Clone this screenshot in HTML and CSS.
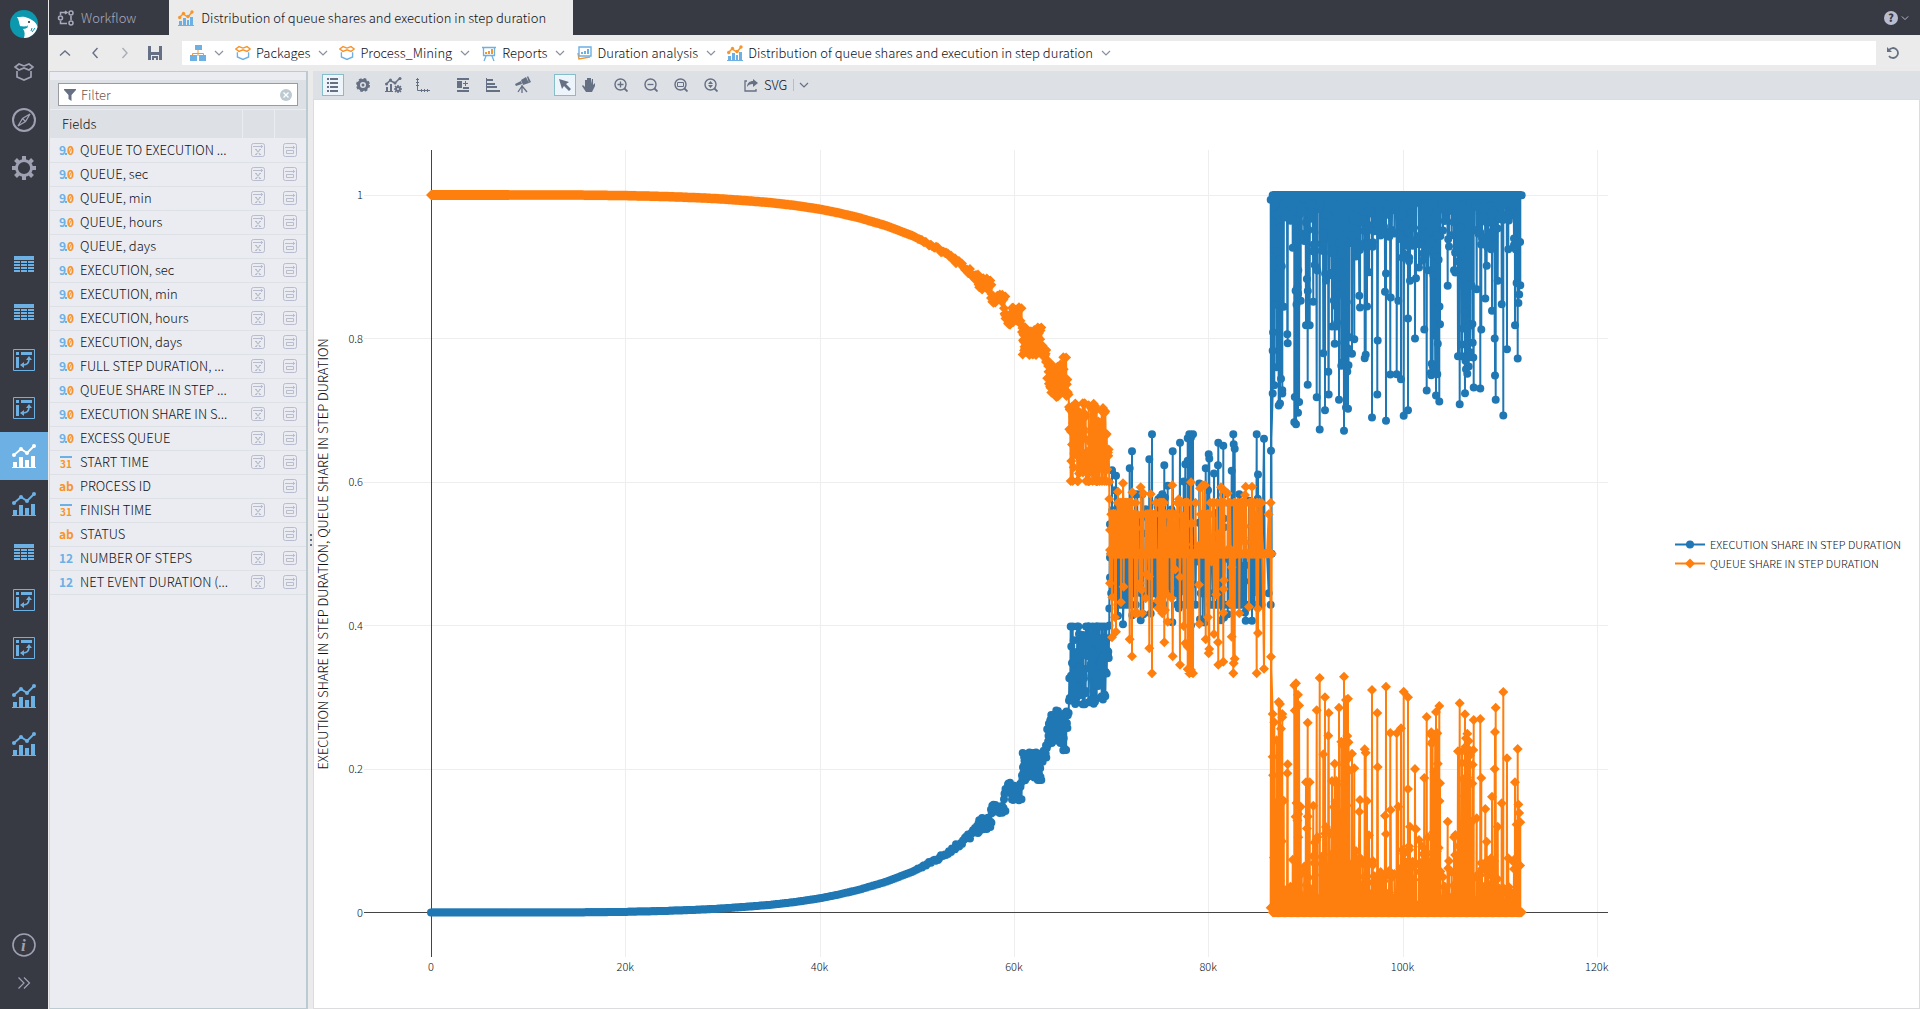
FILE: index.html
```html
<!DOCTYPE html>
<html lang="en">
<head>
<meta charset="utf-8">
<title>Distribution of queue shares and execution in step duration</title>
<link rel="stylesheet" href="styles.css">
</head>
<body>
<svg class="sprite" aria-hidden="true">
  <symbol id="i-table" viewBox="0 0 20 16"><path fill="currentColor" d="M0 0h20v4H0zM0 5h6v2H0zM7 5h6v2H7zM14 5h6v2h-6zM0 8h6v2H0zM7 8h6v2H7zM14 8h6v2h-6zM0 11h6v2H0zM7 11h6v2H7zM14 11h6v2h-6zM0 14h6v2H0zM7 14h6v2H7zM14 14h6v2h-6z"/></symbol>
  <symbol id="i-pivot" viewBox="0 0 22 22"><path fill="none" stroke="currentColor" d="M.5.5h21v21H.5z"/><path fill="currentColor" d="M3 3h3v3H3zM8 3h11v3H8zM3 8h3v11H3zM16 7l3 4h-6zM7 16l4-3v6z"/><path fill="none" stroke="currentColor" stroke-width="1.6" d="M16 10c0 4-2 6-6 6"/></symbol>
  <symbol id="i-chart" viewBox="0 0 24 24"><path fill="currentColor" d="M0 23h24v1H0zM1 18h4v5H1zM7 13h4v10H7zM13 16h4v7h-4zM19 12h4v11h-4z"/><path fill="none" stroke="currentColor" stroke-width="1.8" d="M2 11l7-6 6 4 7-7"/><g fill="currentColor"><circle cx="2" cy="11" r="2"/><circle cx="9" cy="5" r="2"/><circle cx="15" cy="9" r="2"/><circle cx="22" cy="2" r="2"/></g></symbol>
  <symbol id="i-chart2" viewBox="0 0 16 16"><path fill="#6db0e4" d="M0 15h16v1H0zM1 11h3v4H1zM5 8h3v7H5zM9 10h2v5H9zM12 7h3v8h-3z"/><path fill="none" stroke="#f7952c" stroke-width="1.4" d="M1 8l4-4 5 3 4-5"/><g fill="#f7952c"><circle cx="1.700" cy="7.500" r="1.700"/><circle cx="5.500" cy="3.500" r="1.700"/><circle cx="10" cy="6.500" r="1.700"/><circle cx="14" cy="2" r="1.700"/></g></symbol>
  <symbol id="i-pack" viewBox="0 0 20 18"><path fill="none" stroke="var(--top)" stroke-width="1.700" d="M10 3L5 1 1 4l4 3 5-2 5 2 4-3-4-3-5 2"/><path fill="none" stroke="var(--low)" stroke-width="1.700" d="M3 8v6l7 3 7-3V8"/></symbol>
  <symbol id="i-down" viewBox="0 0 10 6"><path fill="none" stroke="currentColor" stroke-width="1.200" d="M1 1l4 4 4-4"/></symbol>
  <symbol id="i-x" viewBox="0 0 14 14"><rect x=".5" y=".5" width="13" height="13" rx="2" fill="none" stroke="currentColor"/><path fill="none" stroke="currentColor" d="M2 3.500h10M10.500 2v3"/><path fill="none" stroke="currentColor" stroke-width="1.200" d="M5 6.500l4 5M9 6.500l-4 5M4 6.500h2M8 6.500h2M4 11.500h2M8 11.500h2"/></symbol>
  <symbol id="i-m" viewBox="0 0 14 14"><rect x=".5" y=".5" width="13" height="13" rx="2" fill="none" stroke="currentColor"/><path fill="none" stroke="currentColor" d="M2 4.500h10M10.500 3v3M3.500 7.500h7v3h-7z"/></symbol>
  <symbol id="i-mag" viewBox="0 0 14 14"><circle cx="6.500" cy="6.500" r="5.500" fill="none" stroke="currentColor" stroke-width="1.400"/><path stroke="currentColor" stroke-width="1.800" d="M10.500 10.500l3 3"/></symbol>
</svg>
<div class="app">
  <nav class="rail" aria-label="Main">
    <button class="rail-item" aria-label="Home"><svg width="28" height="28" viewBox="0 0 28 28"><circle cx="14" cy="14" r="14" fill="#0c98ae"/><path fill="#fff" d="M7 7c3 0 7-1 11 1 5 2 9 5 9.500 9C26 23 21 28 14 28c1-4 1-6-1-9 2 0 4-1 5-2-3 0-6 0-8-1-1-3-1-6-3-9z"/><path d="M11 17c3 0 5 0 7-1M22 18l-1 3M25 18l-3 4" fill="none" stroke="#0c98ae"/><circle cx="19" cy="12" r="1" fill="#223"/></svg></button>
    <button class="rail-item" aria-label="Packages"><svg class="mono" width="20" height="18"><use href="#i-pack"/></svg></button>
    <button class="rail-item" aria-label="Explore"><svg width="24" height="24" viewBox="0 0 24 24" fill="none" stroke="currentColor"><circle cx="12" cy="12" r="11" stroke-width="2"/><path stroke-width="1.300" d="M18 6l-4.500 7.500L6 18l4.500-7.500zM10.500 10.500l3 3"/></svg></button>
    <button class="rail-item" aria-label="Settings"><svg width="24" height="24" viewBox="0 0 24 24" fill="none" stroke="currentColor"><circle cx="12" cy="12" r="7.500" stroke-width="2.800"/><g stroke-width="4"><path d="M12 0v4M12 20v4M0 12h4M20 12h4M3.500 3.500l3 3M17.500 17.500l3 3M3.500 20.500l3-3M17.500 6.500l3-3"/></g></svg></button>
    <div class="rail-docs">
      <button class="rail-item" aria-label="Table 1"><svg width="20" height="16"><use href="#i-table"/></svg></button>
      <button class="rail-item" aria-label="Table 2"><svg width="20" height="16"><use href="#i-table"/></svg></button>
      <button class="rail-item" aria-label="Pivot 1"><svg width="22" height="22"><use href="#i-pivot"/></svg></button>
      <button class="rail-item" aria-label="Pivot 2"><svg width="22" height="22"><use href="#i-pivot"/></svg></button>
      <button class="rail-item current" aria-label="Chart 1"><svg width="24" height="24"><use href="#i-chart"/></svg></button>
      <button class="rail-item" aria-label="Chart 2"><svg width="24" height="24"><use href="#i-chart"/></svg></button>
      <button class="rail-item" aria-label="Table 3"><svg width="20" height="16"><use href="#i-table"/></svg></button>
      <button class="rail-item" aria-label="Pivot 3"><svg width="22" height="22"><use href="#i-pivot"/></svg></button>
      <button class="rail-item" aria-label="Pivot 4"><svg width="22" height="22"><use href="#i-pivot"/></svg></button>
      <button class="rail-item" aria-label="Chart 3"><svg width="24" height="24"><use href="#i-chart"/></svg></button>
      <button class="rail-item" aria-label="Chart 4"><svg width="24" height="24"><use href="#i-chart"/></svg></button>
    </div>
    <button class="rail-item about" aria-label="About"><svg width="24" height="24" viewBox="0 0 24 24"><circle cx="12" cy="12" r="11" fill="none" stroke="currentColor" stroke-width="1.600"/><text class="info" x="9" y="18" fill="currentColor">i</text></svg></button>
    <button class="rail-item expand" aria-label="Expand"><svg width="12" height="12" viewBox="0 0 12 12" fill="none" stroke="currentColor" stroke-width="1.200"><path d="M.5.500L6 6 .5 11.500M6 .500L11.500 6 6 11.500"/></svg></button>
  </nav>

  <div class="main">
    <header class="tabs">
      <button class="tab"><svg width="16" height="16" viewBox="0 0 16 16" fill="none" stroke="currentColor" stroke-width="1.500"><circle cx="2.500" cy="8" r="2"/><circle cx="13" cy="3" r="2"/><circle cx="13" cy="13" r="2"/><path d="M2.500 5V2.500H8M13 6v4M2.500 11v2.500H9M7 1l2 1.500L7 4"/></svg>Workflow</button>
      <button class="tab open"><svg width="16" height="16"><use href="#i-chart2"/></svg>Distribution of queue shares and execution in step duration</button>
      <button class="help" aria-label="Help"><svg width="14" height="14" viewBox="0 0 14 14"><circle cx="7" cy="7" r="7" fill="#b9bdcf"/><text class="q" x="4" y="11">?</text></svg><svg width="8" height="6"><use href="#i-down"/></svg></button>
    </header>

    <div class="path-row">
      <div class="nav-buttons">
        <button aria-label="Up"><svg width="10" height="6" viewBox="0 0 10 6" fill="none" stroke="currentColor" stroke-width="1.400"><path d="M0 5.500L5 1l5 4.500"/></svg></button>
        <button aria-label="Back"><svg width="6" height="10" viewBox="0 0 6 10" fill="none" stroke="currentColor" stroke-width="1.400"><path d="M5.500 0L1 5l4.500 5"/></svg></button>
        <button class="faint" aria-label="Forward"><svg width="6" height="10" viewBox="0 0 6 10" fill="none" stroke="currentColor" stroke-width="1.400"><path d="M.5 0L5 5 .5 10"/></svg></button>
        <button aria-label="Save"><svg width="14" height="14" viewBox="0 0 14 14"><path fill="currentColor" d="M0 0h3v6h8V0h3v14h-3V9H3v5H0zM4 10h6v4H8v-2H6v2H4z"/></svg></button>
      </div>
      <div class="crumbs">
        <button class="crumb"><svg width="16" height="16" viewBox="0 0 16 16"><path fill="none" stroke="#f7952c" d="M8 5v3M2.500 11V8.500h11V11M8 8v3"/><path fill="#6db0e4" d="M5 0h7v5H5zM0 10h7v6H0zM9 10h7v6H9z"/></svg><svg class="chev" width="10" height="6"><use href="#i-down"/></svg></button>
        <button class="crumb"><svg class="duo" width="16" height="16"><use href="#i-pack"/></svg>Packages<svg class="chev" width="10" height="6"><use href="#i-down"/></svg></button>
        <button class="crumb"><svg class="duo" width="16" height="16"><use href="#i-pack"/></svg>Process_Mining<svg class="chev" width="10" height="6"><use href="#i-down"/></svg></button>
        <button class="crumb"><svg width="16" height="16" viewBox="0 0 16 16"><path fill="none" stroke="#6db0e4" stroke-width="1.300" d="M1 2.500h14M2.500 3v7.500h11V3M5 11l-2 5M11 11l2 5"/><path fill="#f7952c" d="M4 7h2v2H4zM7 6h2v3H7zM10 4h2v5h-2z"/></svg>Reports<svg class="chev" width="10" height="6"><use href="#i-down"/></svg></button>
        <button class="crumb"><svg width="16" height="16" viewBox="0 0 16 16"><path fill="none" stroke="#f7952c" stroke-width="1.500" d="M2 8l1 6 11-2"/><path fill="#fff" stroke="#6db0e4" stroke-width="1.400" d="M3 2h12v9H3z"/><path fill="#6db0e4" d="M5 7h2v2H5zM8 6h2v3H8zM11 4h2v5h-2z"/></svg>Duration analysis<svg class="chev" width="10" height="6"><use href="#i-down"/></svg></button>
        <button class="crumb"><svg width="16" height="16"><use href="#i-chart2"/></svg>Distribution of queue shares and execution in step duration<svg class="chev" width="10" height="6"><use href="#i-down"/></svg></button>
      </div>
      <button class="reload" aria-label="Reload"><svg width="14" height="14" viewBox="0 0 14 14"><path fill="none" stroke="currentColor" stroke-width="1.800" d="M3 4a5 5 0 1 1 0 6"/><path fill="currentColor" d="M1 1v5h5z"/></svg></button>
    </div>

    <div class="work">
      <aside class="panel">
        <div class="filter-row">
          <label class="filter"><svg width="12" height="12" viewBox="0 0 12 12"><path fill="#667084" d="M0 0h12v1L7.500 6v6l-3-2V6L0 1z"/></svg><input type="text" placeholder="Filter" aria-label="Filter"><svg width="12" height="12" viewBox="0 0 12 12"><circle cx="6" cy="6" r="6" fill="#bccad2"/><path stroke="#fff" stroke-width="1.300" d="M3.500 3.500l5 5M8.500 3.500l-5 5"/></svg></label>
        </div>
        <table class="fields">
          <thead><tr><th>Fields</th><th class="act"></th><th class="act"></th></tr></thead>
          <tbody id="fields"></tbody>
        </table>
      </aside>
      <div class="grip"><i></i><i></i><i></i></div>
      <section class="view">
        <div class="toolbar">
          <button class="tool on" aria-label="Legend"><svg width="12" height="14" viewBox="0 0 12 14"><path fill="currentColor" d="M0 0h2v2H0zM3 0h8v2H3zM0 4h2v2H0zM3 4h8v2H3zM0 8h2v2H0zM3 8h8v2H3zM0 12h2v2H0zM3 12h8v2H3z"/></svg></button>
          <button class="tool" aria-label="Options"><svg width="14" height="14" viewBox="0 0 14 14"><circle cx="7" cy="7" r="4.500" fill="none" stroke="currentColor" stroke-width="3"/><circle cx="7" cy="7" r="6" fill="none" stroke="currentColor" stroke-width="2" stroke-dasharray="2.700 2"/><circle cx="7" cy="7" r="1.500" fill="currentColor"/></svg></button>
          <button class="tool" aria-label="Series options"><svg width="17" height="16" viewBox="0 0 17 16"><path fill="none" stroke="currentColor" stroke-width="1.500" d="M1 7.500l4-4L10 6l5-5"/><path fill="currentColor" d="M0 14h8v1H0zM1 10h2v4H1zM5 7h2v7H5z"/><g fill="currentColor"><circle cx="1.500" cy="7" r="1.500"/><circle cx="5.500" cy="3" r="1.500"/><circle cx="10" cy="6" r="1.500"/><circle cx="15" cy="1.500" r="1.500"/></g><circle cx="13" cy="12" r="2" fill="none" stroke="currentColor" stroke-width="2"/><path stroke="currentColor" stroke-width="1.500" d="M13 8v1.500M13 14.500V16M9 12h1.500M15.500 12H17M10 9l1 1M15 14l1 1M16 9l-1 1M11 14l-1 1"/></svg></button>
          <button class="tool" aria-label="Axes"><svg width="14" height="14" viewBox="0 0 14 14"><path fill="none" stroke="currentColor" d="M1.500 0v12.500H14M0 1.500h3M0 4.500h3M0 7.500h3M5.500 11v3M8.500 11v3M11.500 11v3"/></svg></button>
          <button class="tool apart" aria-label="Layout"><svg width="14" height="14" viewBox="0 0 14 14"><path fill="currentColor" d="M1 0h12v2H1zM1 3h5v7H1zM1 12h12v2H1zM7 9h6v2H7zM9 3h1v2h2v1h-2v2H9V6H7V5h2z"/></svg></button>
          <button class="tool" aria-label="Sort"><svg width="14" height="14" viewBox="0 0 14 14"><path fill="currentColor" d="M0 0h1v14H0zM1 1h6v2H1zM1 5h8v2H1zM1 8h10v2H1zM1 12h13v2H1z"/></svg></button>
          <button class="tool" aria-label="Preview"><svg width="16" height="16" viewBox="0 0 16 16"><path fill="currentColor" d="M0 7l6-3 1 3-6 2zM6 3l5-3 3 6-6 2zM12 0l1-1 3 6-2 1z"/><path fill="none" stroke="currentColor" stroke-width="1.300" d="M7 8v8M7 9l-4 6M7 9l5 6"/></svg></button>
          <button class="tool on apart-s" aria-label="Select"><svg width="14" height="14" viewBox="0 0 14 14"><path fill="currentColor" d="M1 1l10 3-3 2 5 5-2 2-5-5-2 3z"/></svg></button>
          <button class="tool hand" aria-label="Pan"><svg width="14" height="14" viewBox="0 0 14 14"><path fill="currentColor" d="M4 14L0 8l1-1 2 2V2h2v4V0h2v6V0h2v6l1-5h1v6l2-2v3l-2 4-1 2z"/></svg></button>
          <button class="tool" aria-label="Zoom in"><svg width="14" height="14" viewBox="0 0 14 14"><use href="#i-mag" width="14" height="14"/><path stroke="currentColor" stroke-width="1.300" d="M3.500 6.500h6M6.500 3.500v6"/></svg></button>
          <button class="tool" aria-label="Zoom out"><svg width="14" height="14" viewBox="0 0 14 14"><use href="#i-mag" width="14" height="14"/><path stroke="currentColor" stroke-width="1.300" d="M3.500 6.500h6"/></svg></button>
          <button class="tool" aria-label="Zoom to fit"><svg width="14" height="14" viewBox="0 0 14 14"><use href="#i-mag" width="14" height="14"/><path fill="none" stroke="currentColor" d="M3.500 4.500h6v4h-6z"/></svg></button>
          <button class="tool" aria-label="Fit height"><svg width="14" height="14" viewBox="0 0 14 14"><use href="#i-mag" width="14" height="14"/><path fill="currentColor" d="M6.500 3l2.500 3H4zM6.500 10L4 7h5z"/></svg></button>
          <button class="export"><svg width="14" height="14" viewBox="0 0 14 14"><path fill="none" stroke="currentColor" stroke-width="1.300" d="M3 3H1v10h11v-2"/><path fill="currentColor" d="M3 9c0-4 3-6 6-6V1l5 4-5 4V6C6 6 4 7 3 9z"/></svg>SVG</button>
          <button class="more" aria-label="Export format"><svg width="10" height="6"><use href="#i-down"/></svg></button>
        </div>
        <div class="chart"><svg id="plot" viewBox="0 0 1605 908" role="img" aria-label="Execution share and queue share in step duration"></svg></div>
      </section>
    </div>
  </div>
</div>
<script src="app.js"></script>
</body>
</html>
```
FILE: styles.css
```css
* { box-sizing: border-box; }
body {
  margin: 0;
  font-family: "Noto Sans CJK SC", "Noto Sans", sans-serif;
  font-size: 13px;
  font-weight: 300;
  line-height: 20px;
  color: #0e1016;
  background: #ebebeb;
}
button {
  margin: 0;
  padding: 0;
  border: 0;
  background: none;
  font: inherit;
  color: inherit;
  white-space: nowrap;
  display: flex;
  align-items: center;
  justify-content: center;
}
svg { flex: none; display: block; overflow: visible; }
.sprite { position: absolute; width: 0; height: 0; overflow: hidden; }
.app { display: flex; height: 100vh; }

.rail {
  width: 48px;
  flex: none;
  display: flex;
  flex-direction: column;
  background: #383a43;
  color: #9fa1b3;
  padding-bottom: 6px;
}
.rail-item { width: 48px; height: 48px; flex: none; }
.rail-item.about { height: 36px; }
.rail-item.expand { height: 40px; }
.rail-docs { margin: 48px 0 auto; color: #6db0e4; }
.rail-item.current { background: #6db0e4; color: #fff; }
.mono { --top: #9fa1b3; --low: #9fa1b3; }
.duo { --top: #f7952c; --low: #6db0e4; }
.info { font: italic bold 17px "Liberation Serif", serif; }

.main { flex: 1; min-width: 0; display: flex; flex-direction: column; margin-left: 1px; }
.tabs { display: flex; height: 35px; flex: none; background: #383a43; }
.tab { gap: 7px; padding: 0 33px 0 9px; color: #a9abbd; }
.tab.open { padding-right: 27px; background: #ebebeb; color: #0e1016; }
.help { margin-left: auto; gap: 3px; padding-right: 11px; color: #b9bdcf; }
.q { font-size: 11px; font-weight: 900; fill: #383a43; }

.path-row { display: flex; align-items: center; height: 36px; flex: none; color: #667084; }
.nav-buttons { display: flex; padding: 0 12px 0 1px; }
.nav-buttons button { width: 30px; height: 24px; }
.nav-buttons .faint { color: #a9aeb9; }
.crumbs {
  flex: 1;
  display: flex;
  gap: 11px;
  height: 24px;
  padding-left: 8px;
  background: #fff;
}
.crumb { gap: 5px; color: #0e1016; }
.chev { color: #8a90a0; margin-left: 3px; }
.reload { width: 44px; padding-right: 10px; height: 24px; }

.work { flex: 1; min-height: 0; display: flex; }
.panel {
  width: 259px;
  flex: none;
  border: 1px solid #bccad2;
  border-left-color: #ccd6dc;
  border-right-width: 2px;
  background: #ebecf1;
  padding-top: 8px;
}
.filter-row { height: 30px; padding: 3px 8px; background: #dde0e5; border-bottom: 1px solid #ebecf1; }
.filter {
  display: flex;
  align-items: center;
  gap: 5px;
  height: 23px;
  padding: 0 5px;
  background: #fff;
  border: 1px solid #999ba0;
}
.filter input { flex: 1; min-width: 0; height: 20px; border: 0; padding: 0; font: inherit; background: none; outline: 0; }
.filter input::placeholder { color: #64584f; opacity: 1; }
.fields { width: 100%; border-collapse: collapse; table-layout: fixed; }
.fields th { height: 28px; padding: 0 0 0 12px; background: #dde0e5; text-align: left; font-weight: inherit; }
.fields .act { width: 32px; padding: 0; border-left: 1px solid #ebecf1; }
.fields td { height: 24px; padding: 0; border-bottom: 1px solid #dde0e5; }
.fields td button { width: 32px; height: 22px; color: #b9bccd; }
.field { display: flex; align-items: center; gap: 5px; padding-left: 9px; line-height: 20px; white-space: nowrap; }
.field svg text { font-size: 12px; font-weight: 700; }
.field svg .date { font-size: 10px; }
.blue { fill: #6db0e4; }
.orange { fill: #f7952c; }
.slash { stroke: #f7952c; }

.grip { width: 5px; flex: none; display: flex; flex-direction: column; align-items: center; justify-content: center; gap: 3px; }
.grip i { width: 2px; height: 2px; background: #667084; }

.view { flex: 1; min-width: 0; display: flex; flex-direction: column; }
.toolbar { display: flex; align-items: center; height: 28px; flex: none; padding-left: 9px; background: #dde0e5; color: #667084; }
.tool { width: 22px; height: 22px; margin-right: 8px; }
.tool.on { background: #edf5fb; border: 1px solid #86bdcb; }
.apart { margin-left: 10px; }
.tool.apart-s { margin-left: 12px; margin-right: 2px; }
.tool.hand { margin-right: 10px; }
.export { gap: 6px; margin-left: 14px; padding-right: 6px; height: 12px; border-right: 1px solid #b9bccd; color: #0e1016; }
.export svg { color: #667084; }
.more { padding: 0 5px; }
.chart { flex: 1; min-height: 0; background: #fff; border: 1px solid #dcdcde; }
.chart svg { width: 100%; height: 100%; }
.chart text { font-size: 11px; fill: #0e1016; }
.chart .title { font-size: 13px; }
.grid { stroke: #eee; }
.zero { stroke: #444; }
.exec-line, .queue-line { fill: none; stroke-width: 2; stroke-linejoin: round; }
.exec-line { stroke: #1f77b4; }
.queue-line { stroke: #ff7f0e; }
.exec-mark { fill: none; stroke: #1f77b4; stroke-width: 8; stroke-linecap: round; }
.queue-mark { fill: #ff7f0e; }
```
FILE: app.js
```js
// Field list: type, label cut to the column, whether the field has a numeric axis action
const fields = [
  ['9', 'QUEUE TO EXECUTION ...', 1], ['9', 'QUEUE, sec', 1], ['9', 'QUEUE, min', 1],
  ['9', 'QUEUE, hours', 1], ['9', 'QUEUE, days', 1], ['9', 'EXECUTION, sec', 1],
  ['9', 'EXECUTION, min', 1], ['9', 'EXECUTION, hours', 1], ['9', 'EXECUTION, days', 1],
  ['9', 'FULL STEP DURATION, ...', 1], ['9', 'QUEUE SHARE IN STEP ...', 1],
  ['9', 'EXECUTION SHARE IN S...', 1], ['9', 'EXCESS QUEUE', 1],
  ['31', 'START TIME', 1], ['ab', 'PROCESS ID', 0], ['31', 'FINISH TIME', 1],
  ['ab', 'STATUS', 0], ['12', 'NUMBER OF STEPS', 1], ['12', 'NET EVENT DURATION (...', 1]
];
const types = {
  '9': '<text class="blue" x="0" y="12">9</text><path class="blue" d="M6 10h2v2H6z"/><text class="orange" x="8" y="12">0</text><path class="slash" d="M10 10l3-6"/>',
  '31': '<path class="blue" d="M1 1h12v2H1z"/><text class="orange date" x="1" y="13">31</text>',
  'ab': '<text class="orange" x="0" y="12">ab</text>',
  '12': '<text class="blue" x="0" y="12">12</text>'
};
const action = (id, label) => `<button aria-label="${label}"><svg width="14" height="14"><use href="#${id}"/></svg></button>`;
document.getElementById('fields').innerHTML = fields.map(([t, name, x]) =>
  `<tr><td><div class="field"><svg width="16" height="14" viewBox="0 0 16 14">${types[t]}</svg><span>${name}</span></div></td>` +
  `<td>${x ? action('i-x', 'X axis') : ''}</td><td>${action('i-m', 'Series')}</td></tr>`).join('');

// Scales
const X0 = 117, XK = 9.715, Y0 = 812.5, YS = 717.5;
const px = k => X0 + k * XK;
const py = v => Y0 - v * YS;

let seed = 7;
const rnd = () => (seed = (seed * 16807) % 2147483647) / 2147483647;
const q = []; // queue share as [x, y] in plot units
const add = (x, y) => q.push([x, y]);

// Smooth part
const curve = [[117, 95], [250, 95], [290, 95.3], [311, 95.6], [330, 96], [350, 96.5], [370, 97.2], [390, 98], [405, 98.8],
  [430, 100.5], [455, 102.5], [480, 105.3], [505, 109], [525, 113], [546, 118],
  [573, 126], [599, 136], [626, 150], [646, 164], [660, 175], [671, 184]];
for (let i = 0; i < curve.length - 1; i++) {
  const [ax, ay] = curve[i], [bx, by] = curve[i + 1];
  for (let x = ax; x < bx; x += 1) {
    const j = x > 600 ? (x - 590) / 14 : 0;
    add(x, ay + (by - ay) * (x - ax) / (bx - ax) + (rnd() - 0.5) * j * 1.6);
  }
}
// Widening steps: x from, x to, y from, y to, number of points
[[664, 678, 178, 190, 24], [677, 692, 194, 203, 24], [690, 708, 207, 225, 36], [708, 729, 227, 255, 60],
  [729, 733, 250, 258, 6], [732, 755, 257, 298, 56], [755, 795, 303, 381, 120]].forEach(([a, b, c, d, n]) => {
  for (let i = 0; i < n; i++) {
    let t = rnd();
    if (n > 100) t = rnd() < 0.1 ? 1 : t * 0.93;
    add(a + (b - a) * i / n, c + (d - c) * t);
  }
});

// Middle band around 0.5, thirds of a unit from (686, 280)
const MX = 686, MY = 280;
const low = [336,772,348,755,345,712,337,652,330,610,363,667,371,620,389,778,396,829,448,805,456,880,437,655,425,630,405,700,
  427,700,493,787,518,829,540,854,556,790,563,800,563,868,568,880,573,870,579,880,551,738,503,725,487,700,475,685,480,690,
  598,732,597,614,617,778,628,807,626,820,642,762,654,787,655,854,670,845,672,601,670,698,624,712,695,770,690,670,701,850,
  700,880,704,836,718,700,747,680,773,686,770,880,774,759,792,866,813,830,328,306,328,357,330,450,330,510,369,310,
  354,335,397,337,422,322,452,342,430,340,517,316,536,358,573,307,600,325,608,316,615,316,663,322,672,330,683,340,737,320,
  756,320,735,345,812,368,806,403,815,521,412,700,495,690];
const mid = [];
for (let i = 0; i < low.length; i += 2) mid.push([low[i], low[i + 1]]);
for (let x = 332; x < 785; x += 1.6) {
  const r = rnd();
  let y = 521;
  const row368 = (x > 350 && x < 415) || (x > 465 && x < 500) || (x > 530 && x < 600) || x > 630;
  if (r < 0.3) y = row368 ? 368 : 403;
  else if (r < 0.4) y = x < 555 ? 403 : 521;
  else if (r < 0.5) y = 403 + rnd() * 118;
  else if (r < 0.55) y = 521 + rnd() * 150;
  mid.push([x, y]);
}
for (let x = 332; x < 816; x += 7) mid.push([x, 521]);
mid.sort((a, b) => a[0] - b[0]);
mid.forEach(([x, y]) => add(MX + x / 3, MY + y / 3));

// Right part: peaks above a zero base, thirds of a unit from (936, 540)
const RX = 936, RY = 540, BASE = 817;
const peaks = [63,50,68,222,68,350,62,803,86,186,90,192,97,222,97,232,73,247,93,266,113,373,112,400,101,482,133,136,138,130,
  144,164,128,659,145,592,152,500,173,248,168,427,179,427,190,497,200,211,209,114,220,343,225,172,236,219,235,287,254,371,
  246,423,267,203,274,305,282,110,288,180,294,176,292,288,306,341,313,385,330,480,328,515,318,633,344,328,347,338,351,483,
  357,586,366,150,368,662,382,219,383,381,408,140,408,582,405,527,421,279,422,510,440,280,453,265,445,500,461,155,474,172,
  474,447,477,619,480,560,495,387,498,568,507,600,523,414,530,231,534,592,544,277,545,311,558,216,562,280,568,198,570,430,
  593,545,597,663,612,592,616,585,629,190,624,334,636,334,645,223,652,281,648,295,656,303,660,346,668,374,671,240,691,237,
  694,414,680,535,706,507,710,605,726,470,723,655,737,203,735,276,734,387,743,560,755,490,760,156,771,355,775,655,795,427,
  803,327,811,547,792,687];
const right = [];
for (let i = 0; i < peaks.length; i += 2) right.push([peaks[i], peaks[i + 1]]);
// Upper limit of the dense part, up to the given x
const limit = [[82, 250], [100, 590], [130, 730], [150, 164], [165, 670], [185, 427], [215, 590], [245, 540], [272, 420],
  [300, 300], [320, 640], [370, 650], [435, 690], [460, 500], [480, 620], [515, 650], [540, 600], [570, 280],
  [610, 680], [625, 590], [640, 340], [672, 320], [700, 660], [745, 640], [790, 730], [813, 450]];
let flip = false;
for (let x = 68; x < 812; x += 1.3) {
  const top = limit.find(l => x <= l[0])[1];
  flip = !flip;
  right.push([x, flip ? BASE : top + (BASE - top) * Math.pow(rnd(), 1.2)]);
}
for (let x = 70; x < 814; x += 3) right.push([x, BASE]);
right.sort((a, b) => a[0] - b[0]);
right.push([815, BASE]);
right.forEach(([x, y]) => add(RX + x / 3, RY + y / 3));

// Execution share mirrors queue share
const e = q.map(([x, y]) => [x, py(0) + py(1) - y]);
const f = n => n.toFixed(1);
const line = pts => 'M' + pts.map(p => f(p[0]) + ' ' + f(p[1])).join('L');
const dots = pts => pts.map(p => `M${f(p[0])} ${f(p[1])}h0`).join('');
const diamonds = pts => pts.map(p => `M${f(p[0] - 5)} ${f(p[1])}l5-5 5 5-5 5z`).join('');

let s = '';
for (let k = 20; k <= 120; k += 20) s += `<path class="grid" d="M${Math.round(px(k)) + 0.5} 50V857"/>`;
for (let v = 1; v <= 5; v++) s += `<path class="grid" d="M50 ${Math.floor(py(v / 5)) + 0.5}H1294"/>`;
s += `<path class="zero" d="M117.5 50V857M50 812.5H1294"/>`;
for (let k = 0; k <= 120; k += 20) s += `<text x="${px(k)}" y="871" text-anchor="middle">${k ? k + 'k' : 0}</text>`;
for (let v = 0; v <= 5; v++) s += `<text x="49" y="${py(v / 5) + 4}" text-anchor="end">${v / 5}</text>`;
s += `<text class="title" transform="translate(14 454) rotate(-90)" text-anchor="middle">EXECUTION SHARE IN STEP DURATION, QUEUE SHARE IN STEP DURATION</text>`;
s += `<path class="exec-line" d="${line(e)}"/><path class="exec-mark" d="${dots(e)}"/>`;
s += `<path class="queue-line" d="${line(q)}"/><path class="queue-mark" d="${diamonds(q)}"/>`;
s += `<path class="exec-line" d="M1361 444.500h30"/><path class="exec-mark" d="M1376 444.500h0"/><text x="1396" y="449">EXECUTION SHARE IN STEP DURATION</text>`;
s += `<path class="queue-line" d="M1361 463.500h30"/><path class="queue-mark" d="${diamonds([[1376, 463.5]])}"/><text x="1396" y="468">QUEUE SHARE IN STEP DURATION</text>`;
document.getElementById('plot').innerHTML = s;
```
